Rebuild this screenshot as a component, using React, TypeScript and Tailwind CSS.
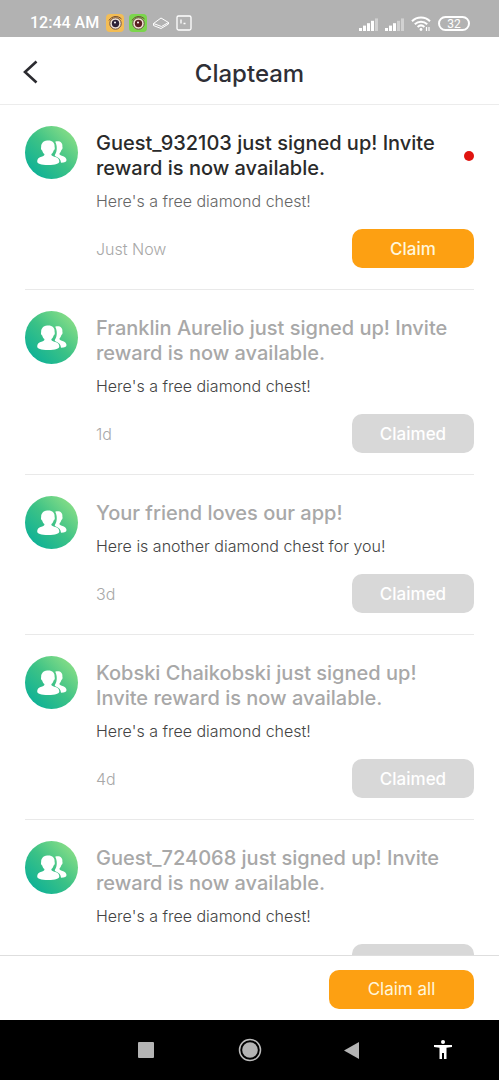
import React from "react";

type Notice = {
  title: string;
  body: string;
  time: string;
  unread?: boolean;
};

const notices: Notice[] = [
  {
    title: "Guest_932103 just signed up! Invite reward is now available.",
    body: "Here's a free diamond chest!",
    time: "Just Now",
    unread: true,
  },
  {
    title: "Franklin Aurelio just signed up! Invite reward is now available.",
    body: "Here's a free diamond chest!",
    time: "1d",
  },
  {
    title: "Your friend loves our app!",
    body: "Here is another diamond chest for you!",
    time: "3d",
  },
  {
    title: "Kobski Chaikobski just signed up! Invite reward is now available.",
    body: "Here's a free diamond chest!",
    time: "4d",
  },
  {
    title: "Guest_724068 just signed up! Invite reward is now available.",
    body: "Here's a free diamond chest!",
    time: "5d",
  },
];

function EyeAppIcon({ green = false }: { green?: boolean }) {
  return (
    <svg viewBox="0 0 18 18" className="size-[18px]" aria-hidden="true">
      <rect width="18" height="18" rx="4" fill={green ? "#7bd64c" : "#f3bd55"} />
      <path d="M3 6.500C6 1.500 12 1.500 15.500 5" fill="none" stroke="#6b4534" strokeWidth="1" />
      <circle cx="9.500" cy="9.500" r="5.700" fill="#f3e6d8" stroke="#6a4c43" strokeWidth="1" />
      <circle cx="9.500" cy="9.500" r="3.700" fill={green ? "#5a1f22" : "#2e2238"} />
      <circle cx="9" cy="8.500" r="1" fill="#fff" />
    </svg>
  );
}

function Signal({ bars }: { bars: number }) {
  return (
    <svg viewBox="0 0 19 14" className="h-[14px] w-[19px]" fill="#fff" aria-hidden="true">
      {[0, 1, 2, 3, 4].map((i) => (
        <rect
          key={i}
          x={i * 4}
          y={11 - i * 2.4}
          width="3"
          height={3 + i * 2.4}
          opacity={i < bars ? 1 : 0.4}
        />
      ))}
    </svg>
  );
}

function StatusBar() {
  return (
    <div className="flex h-[37px] shrink-0 items-end justify-between bg-[#b2b2b2] pr-[29px] pb-[5px] pl-[30px] text-white">
      <div className="flex items-center gap-[5px]">
        <span className="mr-[2px] font-[Roboto] text-[16px] leading-[18px] font-medium">12:44 AM</span>
        <EyeAppIcon />
        <EyeAppIcon green />
        <svg viewBox="0 0 18 18" className="size-[18px]" fill="none" stroke="#fff" strokeWidth="1" aria-hidden="true">
          <path d="M1.500 9.500 9 4l7.500 4.500L9.500 12.500Z" />
          <path d="M1.500 9.500v2L9 14.500l7.500-4.500V8.500" />
        </svg>
        <svg viewBox="0 0 18 18" className="size-[18px]" fill="none" stroke="#fff" strokeWidth="1.300" aria-hidden="true">
          <rect x="2" y="2" width="14" height="14" rx="1.500" />
          <path d="M6 5.500v4M8.500 9.500h2" />
        </svg>
      </div>
      <div className="flex items-center gap-[7px]">
        <Signal bars={4} />
        <Signal bars={3} />
        <svg viewBox="0 0 20 17" className="h-[17px] w-[20px]" fill="none" stroke="#fff" strokeWidth="2" aria-hidden="true">
          <path d="M1 6.200C6 1.200 14 1.200 19 6.200M3.800 9.200c3.500-3.400 8.900-3.400 12.400 0M6.600 12c2-1.900 4.800-1.900 6.800 0" />
          <circle cx="10" cy="14.500" r="1.400" fill="#fff" stroke="none" />
          <path d="M15.500 12v4M18 12v4" strokeWidth="1.200" />
        </svg>
        <span className="flex h-[15px] w-[32px] items-center justify-center rounded-full border-2 border-white font-[Roboto] text-[12px] leading-[12px]">
          32
        </span>
      </div>
    </div>
  );
}

function FriendsAvatar() {
  return (
    <span className="mt-[21px] flex size-[53px] shrink-0 items-center justify-center rounded-full bg-[linear-gradient(45deg,#0eb196_12%,#3cc286_50%,#8ee087_92%)]">
      <svg viewBox="0 0 30 26" className="h-[26px] w-[30px]" fill="#fff" aria-hidden="true">
        <path d="M18.200 1.700c4.600-1.200 7.600.8 7.200 5 .5 1.400-.1 2.800-1 3.300-.4 1.500-1.100 2.700-1.900 3.400-.2 1.200.5 1.700 2.300 2.300 3.200 1 4.700 2.300 4.700 4.400 0 1.900-1.700 2.700-5.500 2.700-.3-3.100-1.900-5.200-5.600-6.500-.9-.4-.7-1.500.2-2.900 1.400-2.300 1.900-7.800-.4-11.700Z" />
        <path d="M5 3.500C6.500.8 8.700.3 11 .5c4.500-.1 7 2.300 6.600 6.500.6 1.300 0 2.900-1 3.500-.5 1.700-1.200 2.800-2.200 3.600-.2 1.400.5 1.900 2.300 2.400 4 1 5.600 2.300 5.600 4.800 0 2.600-3.700 3.700-11.100 3.700S.2 23.900.2 21.300c0-2.500 1.500-3.800 5-4.800 1.700-.5 2.400-1 2.200-2.400-1-.8-1.700-1.900-2.200-3.600-1-.6-1.600-2.200-1-3.500-.2-1.300.1-2.500.8-3.500Z" />
      </svg>
    </span>
  );
}

function NoticeRow({ title, body, time, unread }: Notice) {
  return (
    <li className="flex gap-[18px] border-b border-[#e9e9e9] pb-[21px]">
      <FriendsAvatar />
      <div className="min-w-0 flex-1 pt-[26px]">
        <div className="flex items-center justify-between gap-2">
          <h2
            className={
              unread
                ? "max-w-[360px] text-[20px] leading-[25px] font-medium text-[#2a2a2a]"
                : "max-w-[360px] text-[20px] leading-[25px] font-medium text-[#a8a8a8]"
            }
          >
            {title}
          </h2>
          {unread && <span className="size-[10px] shrink-0 rounded-full bg-[#e0140f]" />}
        </div>
        <p
          className={
            unread
              ? "mt-[10px] text-[16px] leading-[20px] font-light text-[#666]"
              : "mt-[10px] text-[16px] leading-[20px] font-light text-[#444]"
          }
        >
          {body}
        </p>
        <div className="mt-[18px] flex items-center justify-between">
          <time className="text-[16px] leading-[20px] font-light text-[#a8a8a8]">{time}</time>
          <button
            type="button"
            disabled={!unread}
            className={
              unread
                ? "h-[39px] w-[122px] rounded-[10px] bg-[#fda012] pt-[2px] text-[17px] font-medium text-[#fff6dc]"
                : "h-[39px] w-[122px] rounded-[10px] bg-[#d8d8d8] pt-[2px] text-[17px] font-medium text-white"
            }
          >
            {unread ? "Claim" : "Claimed"}
          </button>
        </div>
      </div>
    </li>
  );
}

function NavBar() {
  return (
    <nav className="grid h-[60px] shrink-0 grid-cols-[1fr_104px_104px_98px_86px] items-center bg-black pr-[13px]" aria-label="System">
      <span />
      <button type="button" aria-label="Recents" className="flex justify-center">
        <svg viewBox="0 0 16 16" className="size-[16px]">
          <rect width="16" height="16" rx="1" fill="#b4b4b4" />
        </svg>
      </button>
      <button type="button" aria-label="Home" className="flex justify-center">
        <svg viewBox="0 0 24 24" className="size-[24px]">
          <circle cx="12" cy="12" r="10.500" fill="none" stroke="#bdbdbd" strokeWidth="1.500" />
          <circle cx="12" cy="12" r="7.800" fill="#b4b4b4" />
        </svg>
      </button>
      <button type="button" aria-label="Back" className="flex justify-center">
        <svg viewBox="0 0 15 17" className="h-[17px] w-[15px]">
          <path d="M15 0v17L0 8.500Z" fill="#b4b4b4" />
        </svg>
      </button>
      <button type="button" aria-label="Accessibility" className="flex justify-center">
        <svg viewBox="0 0 18 20" className="h-[20px] w-[18px]" fill="#fff">
          <circle cx="9" cy="2" r="2" />
          <path d="M0 5h18v2l-5.500.8V19H10v-6H8v6H5.500V7.800L0 7Z" />
        </svg>
      </button>
    </nav>
  );
}

export default function App() {
  return (
    <div className="flex h-dvh flex-col bg-white font-[Inter,'Liberation_Sans',sans-serif]">
      <StatusBar />
      <header className="grid h-[68px] shrink-0 grid-cols-[60px_1fr_60px] items-center border-b border-[#ececec]">
        <button type="button" aria-label="Go back" className="flex pt-[2px] pl-[22px]">
          <svg viewBox="0 0 16 24" className="h-[24px] w-[16px]" fill="none" stroke="#2b2b30" strokeWidth="2.600">
            <path d="M14.500 1.500 3 12l11.500 10.500" />
          </svg>
        </button>
        <h1 className="pt-[6px] text-center text-[24px] leading-[30px] font-medium text-[#2f2f36]">Clapteam</h1>
      </header>
      <main className="min-h-0 flex-1 overflow-y-auto px-[25px] [scrollbar-width:none]">
        <ul>
          {notices.map((n) => (
            <NoticeRow key={n.title} {...n} />
          ))}
        </ul>
      </main>
      <footer className="flex h-[65px] shrink-0 items-end justify-end border-t border-[#dedede] px-[25px] pb-[11px]">
        <button type="button" className="h-[39px] w-[145px] rounded-[10px] bg-[#fda012] text-[17px] text-[#fff6dc]">
          Claim all
        </button>
      </footer>
      <NavBar />
    </div>
  );
}
